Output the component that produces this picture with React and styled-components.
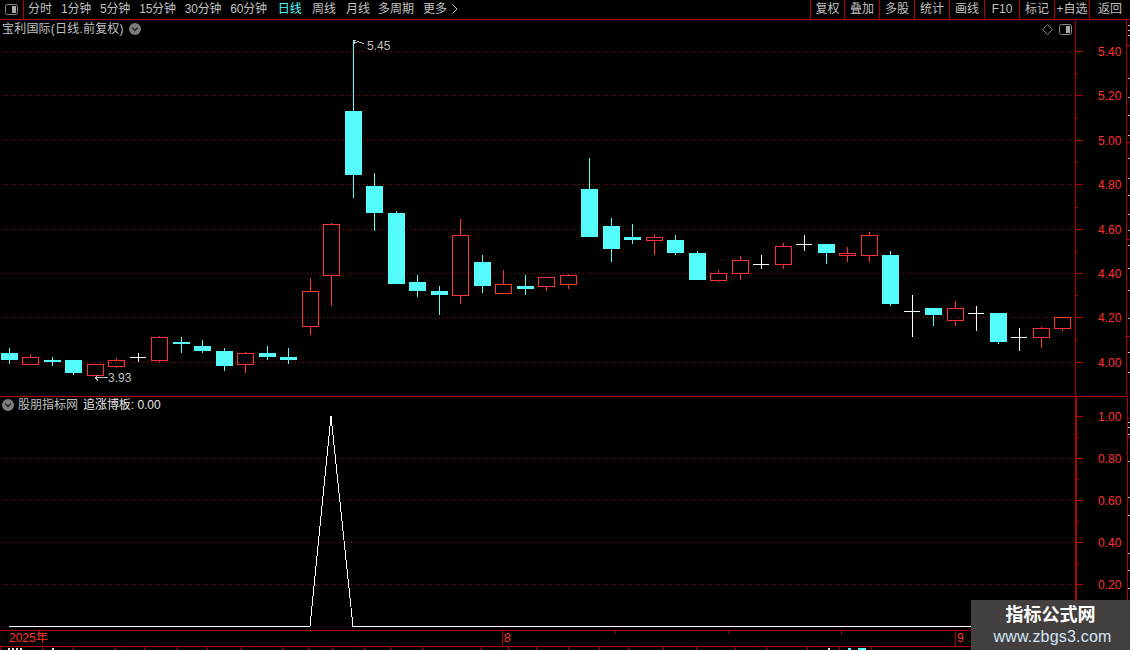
import React from 'react';
import styled, { createGlobalStyle } from 'styled-components';

const RED = '#ff3232';
const FRAME = '#b00000';
const DOT = '#a00808';
const CYAN = '#54fcfc';
const GREY = '#c0c0c0';

const GlobalStyle = createGlobalStyle`
  html, body {
    margin: 0;
    background: #000;
  }
  * {
    box-sizing: border-box;
  }
`;

const Page = styled.div`
  position: relative;
  width: 1130px;
  height: 650px;
  overflow: hidden;
  display: flex;
  flex-direction: column;
  background: #000;
  color: ${GREY};
  font: 12px "Liberation Sans", "Noto Sans CJK SC", sans-serif;
`;

const Toolbar = styled.div`
  height: 20px;
  flex: none;
  display: flex;
  align-items: stretch;
  line-height: 18px;
  border-bottom: 1px solid ${FRAME};
`;

const IconCell = styled.div`
  width: 24px;
  display: flex;
  align-items: center;
  padding-left: 5px;
  border-right: 1px solid ${FRAME};
`;

const PeriodNav = styled.div`
  flex: 1;
  display: flex;
  align-items: flex-start;
  gap: 9px;
  padding-left: 4px;
`;

const PeriodItem = styled.span`
  color: ${(p) => (p.$active ? CYAN : GREY)};
  margin-left: ${(p) => p.$shift}px;
  letter-spacing: ${(p) => (p.$tight ? '-0.2px' : '0')};
  white-space: nowrap;
`;

const MoreArrow = styled.svg`
  margin: 4px 0 0 -4px;
`;

const ActionButton = styled.div`
  width: ${(p) => p.$width}px;
  display: flex;
  justify-content: center;
  border-left: 1px solid ${FRAME};
  white-space: nowrap;
`;

const Workspace = styled.div`
  flex: 1;
  min-height: 0;
  display: flex;
`;

const PaneStack = styled.div`
  width: 1127px;
  flex: none;
  display: flex;
  flex-direction: column;
`;

const Pane = styled.div`
  height: ${(p) => p.$height}px;
  flex: none;
  display: flex;
  border-bottom: ${(p) => (p.$ruled ? `1px solid ${FRAME}` : 'none')};
`;

const ChartArea = styled.div`
  position: relative;
  width: 1075px;
  flex: none;
  svg {
    display: block;
  }
`;

const PaneTitle = styled.div`
  position: absolute;
  top: ${(p) => p.$top}px;
  left: ${(p) => p.$left}px;
  display: flex;
  align-items: center;
  gap: ${(p) => p.$gap}px;
  line-height: 14px;
  letter-spacing: ${(p) => p.$spacing || 0}px;
  white-space: nowrap;
`;

const TitleValue = styled.span`
  color: #e8e8e8;
  margin-left: 1px;
  letter-spacing: -0.05px;
`;

const CornerIcons = styled.div`
  position: absolute;
  top: 4px;
  right: 3px;
  display: flex;
  align-items: center;
  gap: 6px;
`;

const Axis = styled.div`
  flex: 1;
  border-left: ${(p) => p.$line}px solid ${FRAME};
  border-right: 1px solid ${FRAME};
  svg {
    display: block;
  }
`;

const TimeAxis = styled.div`
  height: 17px;
  flex: none;
  display: flex;
  border-top: 1px solid ${FRAME};
  border-bottom: 1px solid ${FRAME};
  color: ${RED};
  line-height: 15px;
`;

const TimeCell = styled.div`
  position: relative;
  width: ${(p) => p.$width}px;
  flex: none;
  padding-left: ${(p) => p.$pad}px;
  border-right: 1px solid ${FRAME};
`;

const TimeTick = styled.i`
  position: absolute;
  top: 0;
  left: ${(p) => p.$left}px;
  width: 1px;
  height: 3px;
  background: ${FRAME};
`;

const TabRow = styled.div`
  flex: 1;
  display: flex;
  overflow: hidden;
`;

const Tab = styled.div`
  width: ${(p) => p.$width}px;
  flex: none;
  display: flex;
  align-items: flex-start;
  padding-top: 1px;
  border-left: 1px solid ${FRAME};
`;

// only the top pixels of the tab captions are left in the window
const TabScrap = styled.i`
  width: ${(p) => p.$width}px;
  height: 2px;
  margin-left: ${(p) => p.$offset}px;
  background: ${(p) => (p.$dashed
    ? `repeating-linear-gradient(90deg, ${p.$color} 0 2px, transparent 2px 4px)`
    : p.$color)};
`;

const SideRuler = styled.div`
  flex: 1;
  svg {
    display: block;
  }
`;

const Watermark = styled.div`
  position: absolute;
  left: 971px;
  top: 600px;
  width: 159px;
  height: 50px;
  display: flex;
  flex-direction: column;
  align-items: center;
  padding-top: 5px;
  background: #433f3f;
`;

const WatermarkTitle = styled.div`
  color: #fff;
  font-size: 18px;
  font-weight: 700;
  line-height: 20px;
`;

const WatermarkUrl = styled.div`
  color: #d2e6f7;
  font-size: 16px;
  line-height: 24px;
  letter-spacing: 0.2px;
  margin-left: 4px;
`;

const periods = [
  ['分时', 0], ['1分钟', 0, true], ['5分钟', 0, true], ['15分钟', 0, true], ['30分钟', 0, true],
  ['60分钟', 0, true], ['日线', 2], ['周线', 1], ['月线', 1], ['多周期', -1], ['更多', 0],
];
const actions = [
  ['复权', 34], ['叠加', 35], ['多股', 35], ['统计', 35], ['画线', 35],
  ['F10', 35], ['标记', 35], ['+自选', 35], ['返回', 41],
];

// x column, kind, wick top, body top, body bottom, wick bottom (page pixels)
const candles = [
  [9, 'c', 348, 353, 360, 364], [30, 'r', 354, 357, 365, 365], [52, 'c', 357, 360, 362, 366],
  [73, 'c', 360, 360, 373, 375], [95, 'r', 364, 364, 376, 376], [116, 'r', 358, 360, 367, 368],
  [138, 'w', 353, 357, 357, 362], [159, 'r', 336, 337, 361, 362], [181, 'c', 337, 342, 344, 353],
  [202, 'c', 340, 346, 351, 353], [224, 'c', 348, 351, 366, 371], [245, 'r', 352, 353, 365, 373],
  [267, 'c', 346, 353, 357, 360], [288, 'c', 348, 357, 360, 364], [310, 'r', 278, 291, 327, 335],
  [331, 'r', 223, 224, 276, 306], [353, 'c', 40, 111, 175, 198], [374, 'c', 173, 186, 213, 231],
  [396, 'c', 211, 213, 284, 284], [417, 'c', 275, 282, 291, 297], [439, 'c', 286, 291, 295, 315],
  [460, 'r', 219, 235, 296, 304], [482, 'c', 255, 262, 286, 293], [503, 'r', 270, 284, 294, 294],
  [525, 'c', 275, 286, 289, 295], [546, 'r', 277, 277, 287, 291], [568, 'r', 274, 275, 285, 289],
  [589, 'c', 158, 189, 237, 237], [611, 'c', 218, 226, 249, 262], [632, 'c', 224, 237, 240, 244],
  [654, 'r', 234, 237, 241, 255], [675, 'c', 235, 240, 253, 255], [697, 'c', 251, 253, 280, 280],
  [718, 'r', 270, 273, 281, 282], [740, 'r', 256, 260, 274, 280], [761, 'w', 255, 264, 264, 269],
  [783, 'r', 243, 246, 265, 269], [804, 'w', 235, 244, 244, 251], [826, 'c', 244, 244, 253, 264],
  [847, 'r', 247, 253, 256, 262], [869, 'r', 232, 235, 256, 262], [890, 'c', 251, 255, 304, 306],
  [912, 'w', 295, 311, 311, 337], [933, 'c', 308, 308, 315, 326], [955, 'r', 301, 308, 321, 326],
  [976, 'w', 306, 313, 313, 331], [998, 'c', 313, 313, 342, 344], [1019, 'w', 328, 337, 337, 351],
  [1041, 'r', 327, 328, 338, 348], [1062, 'r', 317, 317, 329, 331],
];

const priceTicks = [
  ['5.40', 51], ['5.20', 95], ['5.00', 140], ['4.80', 184],
  ['4.60', 229], ['4.40', 273], ['4.20', 317], ['4.00', 362],
];
const indicatorTicks = [['1.00', 416], ['0.80', 458], ['0.60', 500], ['0.40', 542], ['0.20', 584]];

const tabWidths = [42, 31, 42, 29, 33, 30, 34, 41, 26, 24, 32, 26, 32, 59, 27, 28, 32, 31, 29, 35, 33, 39, 31, 41, 32, 32, 100];
const tabScraps = {
  0: [{ offset: 7, width: 14, color: '#e8e8e8', dashed: true }],
  1: [{ offset: 9, width: 2, color: '#e8e8e8' }],
  24: [{ offset: 20, width: 2, color: '#e8e8e8' }],
  25: [{ offset: 8, width: 3, color: CYAN }, { offset: 7, width: 8, color: CYAN }],
};

const sideWhite = [25, 30, 35, 78, 97, 115, 135, 158, 178, 195, 214, 230, 245, 268, 290, 318, 352, 372, 422, 427, 434, 461, 497, 515, 553, 570, 588];
const sideRed = [45, 142, 239, 336, 418, 437];

function PanelIcon() {
  return (
    <svg width="13" height="11" viewBox="0 0 13 11">
      <rect x="0.5" y="0.5" width="12" height="10" rx="2" fill="none" stroke="#8a8a8a" />
      <rect x="7" y="2" width="4" height="7" fill="#a8a8a8" />
    </svg>
  );
}

function DiamondIcon() {
  return (
    <svg width="11" height="11" viewBox="0 0 11 11">
      <path d="M5.5 0.5 L10.5 5.5 L5.5 10.5 L0.5 5.5 Z" fill="none" stroke="#808080" />
    </svg>
  );
}

function ChevronBadge() {
  return (
    <svg width="12" height="12" viewBox="0 0 12 12">
      <circle cx="6" cy="6" r="6" fill="#7c7c7c" />
      <path d="M3 4.6 L6 7.6 L9 4.6" fill="none" stroke="#222" strokeWidth="1.4" />
    </svg>
  );
}

function Candle({ x, kind, wickTop, bodyTop, bodyBottom, wickBottom }) {
  const mid = x + 0.5;
  if (kind === 'w') {
    return (
      <g stroke="#fff">
        <line x1={mid} x2={mid} y1={wickTop} y2={wickBottom} />
        <line x1={x - 8} x2={x + 8} y1={bodyTop + 0.5} y2={bodyTop + 0.5} />
      </g>
    );
  }
  const color = kind === 'c' ? CYAN : RED;
  return (
    <g stroke={color}>
      <line x1={mid} x2={mid} y1={wickTop} y2={bodyTop} />
      <line x1={mid} x2={mid} y1={bodyBottom} y2={wickBottom} />
      {kind === 'c' ? (
        <rect x={x - 8} y={bodyTop} width={17} height={bodyBottom - bodyTop} fill={color} stroke="none" />
      ) : (
        <rect x={x - 7.5} y={bodyTop + 0.5} width={16} height={bodyBottom - bodyTop - 1} fill="none" />
      )}
    </g>
  );
}

function GridLines({ ticks }) {
  return ticks.map(([label, y]) => (
    <line key={label} x1="3" x2="1075" y1={y + 0.5} y2={y + 0.5} stroke={DOT} strokeDasharray="1 3" />
  ));
}

function PriceChart() {
  return (
    <svg width="1075" height="376" viewBox="0 20 1075 376" shapeRendering="crispEdges">
      <GridLines ticks={priceTicks} />
      {candles.map(([x, kind, wickTop, bodyTop, bodyBottom, wickBottom]) => (
        <Candle key={x} x={x} kind={kind} wickTop={wickTop} bodyTop={bodyTop} bodyBottom={bodyBottom} wickBottom={wickBottom} />
      ))}
      <path d="M354 40h2M354 40v4M354 42h3M357 41h2M359 42h3M362 43h2" fill="none" stroke={GREY} />
      <path d="M95 377.5h13M95 377.5l3-2M95 377.5l3 3" fill="none" stroke={GREY} />
      <g fill={GREY} fontSize="12" fontFamily="Liberation Sans" shapeRendering="auto">
        <text x="367" y="50">5.45</text>
        <text x="108" y="382">3.93</text>
      </g>
    </svg>
  );
}

function IndicatorChart() {
  return (
    <svg width="1075" height="233" viewBox="0 397 1075 233" shapeRendering="crispEdges">
      <GridLines ticks={indicatorTicks.slice(1)} />
      <polyline points="9,626.5 310,626.5 331,416 353,626.5 1075,626.5" fill="none" stroke="#fff" />
    </svg>
  );
}

function AxisScale({ ticks, top, height, labelX }) {
  const minor = ticks.slice(0, -1).map(([, y], i) => Math.round((y + ticks[i + 1][1]) / 2));
  return (
    <svg width="50" height={height} viewBox={`0 ${top} 50 ${height}`}>
      <g shapeRendering="crispEdges" stroke={FRAME}>
        {ticks.map(([label, y]) => (
          <line key={label} x1="0" x2="6" y1={y + 0.5} y2={y + 0.5} />
        ))}
        {minor.map((y) => (
          <line key={y} x1="0" x2="2" y1={y + 0.5} y2={y + 0.5} />
        ))}
      </g>
      <g fill={RED} fontSize="12" fontFamily="Liberation Sans">
        {ticks.map(([label, y]) => (
          <text key={label} x={labelX} y={y + 5}>{label}</text>
        ))}
      </g>
    </svg>
  );
}

export default function App() {
  return (
    <Page>
      <GlobalStyle />
      <Toolbar>
        <IconCell><PanelIcon /></IconCell>
        <PeriodNav>
          {periods.map(([label, shift, tight]) => (
            <PeriodItem key={label} $active={label === '日线'} $shift={shift} $tight={tight}>{label}</PeriodItem>
          ))}
          <MoreArrow width="6" height="10" viewBox="0 0 6 10">
            <path d="M0.5 0.5 L5 5 L0.5 9.5" fill="none" stroke={GREY} />
          </MoreArrow>
        </PeriodNav>
        {actions.map(([label, width]) => (
          <ActionButton key={label} $width={width}>{label}</ActionButton>
        ))}
      </Toolbar>

      <Workspace>
        <PaneStack>
          <Pane $height={377} $ruled>
            <ChartArea>
              <PriceChart />
              <PaneTitle $top={2} $left={2} $gap={5} $spacing={0.2}>
                <span>宝利国际(日线.前复权)</span>
                <ChevronBadge />
              </PaneTitle>
              <CornerIcons>
                <DiamondIcon />
                <PanelIcon />
              </CornerIcons>
            </ChartArea>
            <Axis $line={1}>
              <AxisScale ticks={priceTicks} top={20} height={376} labelX={22} />
            </Axis>
          </Pane>

          <Pane $height={233}>
            <ChartArea>
              <IndicatorChart />
              <PaneTitle $top={1} $left={2} $gap={4}>
                <ChevronBadge />
                <span>股朋指标网</span>
                <TitleValue>追涨博板: 0.00</TitleValue>
              </PaneTitle>
            </ChartArea>
            <Axis $line={2}>
              <AxisScale ticks={indicatorTicks} top={397} height={233} labelX={21} />
            </Axis>
          </Pane>

          <TimeAxis>
            <TimeCell $width={503} $pad={9}>2025年</TimeCell>
            <TimeCell $width={453} $pad={1}>
              8
              <TimeTick $left={112} />
              <TimeTick $left={225} />
              <TimeTick $left={338} />
            </TimeCell>
            <TimeCell $width={171} $pad={1}>9</TimeCell>
          </TimeAxis>

          <TabRow>
            {tabWidths.map((width, i) => (
              <Tab key={i} $width={width}>
                {(tabScraps[i] || []).map((s) => (
                  <TabScrap key={s.offset} $offset={s.offset} $width={s.width} $color={s.color} $dashed={s.dashed} />
                ))}
              </Tab>
            ))}
          </TabRow>
        </PaneStack>

        <SideRuler>
          <svg width="3" height="630" viewBox="0 20 3 630" shapeRendering="crispEdges">
            {sideWhite.map((y) => (
              <line key={y} x1="1" x2="3" y1={y + 0.5} y2={y + 0.5} stroke="#d0d0d0" />
            ))}
            {sideRed.map((y) => (
              <line key={y} x1="0" x2="3" y1={y + 0.5} y2={y + 0.5} stroke={FRAME} />
            ))}
          </svg>
        </SideRuler>
      </Workspace>

      <Watermark>
        <WatermarkTitle>指标公式网</WatermarkTitle>
        <WatermarkUrl>www.zbgs3.com</WatermarkUrl>
      </Watermark>
    </Page>
  );
}
